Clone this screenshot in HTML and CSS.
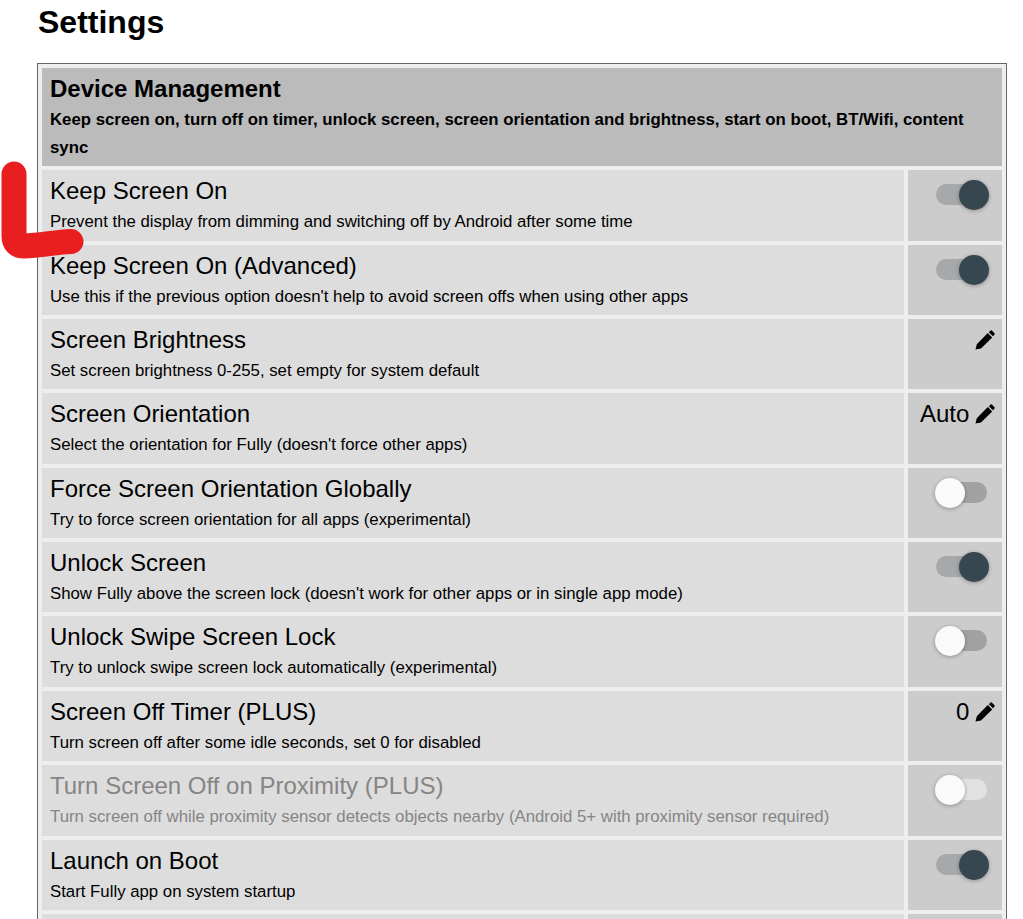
FILE: index.html
```html
<!DOCTYPE html>
<html lang="en">
<head>
    <meta charset="UTF-8">
    <meta name="viewport" content="width=device-width, initial-scale=1.0">
    <title>Settings</title>
    <link rel="stylesheet" href="styles.css">
</head>
<body>
    <h1>Settings</h1>
    <table class="settings">
        <tr>
            <td class="group" colspan="2">
                <div class="group-title">Device Management</div>
                <div class="group-desc">Keep screen on, turn off on timer, unlock screen, screen orientation and brightness, start on boot, BT/Wifi, content sync</div>
            </td>
        </tr>
        <tr>
            <td class="info"><div class="name">Keep Screen On</div><div class="desc">Prevent the display from dimming and switching off by Android after some time</div></td>
            <td class="value"><span class="switch on"><span class="knob"></span></span></td>
        </tr>
        <tr>
            <td class="info"><div class="name">Keep Screen On (Advanced)</div><div class="desc">Use this if the previous option doesn't help to avoid screen offs when using other apps</div></td>
            <td class="value"><span class="switch on"><span class="knob"></span></span></td>
        </tr>
        <tr>
            <td class="info"><div class="name">Screen Brightness</div><div class="desc">Set screen brightness 0-255, set empty for system default</div></td>
            <td class="value"><svg class="pencil" viewBox="0 0 20 20"><path d="M.5 19.5L1.8 14.2L12.8 3L17.2 7.4L6 18.4ZM13.8 2.2L15.6.5Q16.2 0 16.8.5L19.5 3.2Q20 3.8 19.5 4.4L18 6.2Z"/></svg></td>
        </tr>
        <tr>
            <td class="info"><div class="name">Screen Orientation</div><div class="desc">Select the orientation for Fully (doesn't force other apps)</div></td>
            <td class="value">Auto <svg class="pencil" viewBox="0 0 20 20"><path d="M.5 19.5L1.8 14.2L12.8 3L17.2 7.4L6 18.4ZM13.8 2.2L15.6.5Q16.2 0 16.8.5L19.5 3.2Q20 3.8 19.5 4.4L18 6.2Z"/></svg></td>
        </tr>
        <tr>
            <td class="info"><div class="name">Force Screen Orientation Globally</div><div class="desc">Try to force screen orientation for all apps (experimental)</div></td>
            <td class="value"><span class="switch"><span class="knob"></span></span></td>
        </tr>
        <tr>
            <td class="info"><div class="name">Unlock Screen</div><div class="desc">Show Fully above the screen lock (doesn't work for other apps or in single app mode)</div></td>
            <td class="value"><span class="switch on"><span class="knob"></span></span></td>
        </tr>
        <tr>
            <td class="info"><div class="name">Unlock Swipe Screen Lock</div><div class="desc">Try to unlock swipe screen lock automatically (experimental)</div></td>
            <td class="value"><span class="switch"><span class="knob"></span></span></td>
        </tr>
        <tr>
            <td class="info"><div class="name">Screen Off Timer (PLUS)</div><div class="desc">Turn screen off after some idle seconds, set 0 for disabled</div></td>
            <td class="value">0 <svg class="pencil" viewBox="0 0 20 20"><path d="M.5 19.5L1.8 14.2L12.8 3L17.2 7.4L6 18.4ZM13.8 2.2L15.6.5Q16.2 0 16.8.5L19.5 3.2Q20 3.8 19.5 4.4L18 6.2Z"/></svg></td>
        </tr>
        <tr class="disabled">
            <td class="info"><div class="name">Turn Screen Off on Proximity (PLUS)</div><div class="desc">Turn screen off while proximity sensor detects objects nearby (Android 5+ with proximity sensor required)</div></td>
            <td class="value"><span class="switch"><span class="knob"></span></span></td>
        </tr>
        <tr>
            <td class="info"><div class="name">Launch on Boot</div><div class="desc">Start Fully app on system startup</div></td>
            <td class="value"><span class="switch on"><span class="knob"></span></span></td>
        </tr>
        <tr>
            <td class="info"><div class="name">&nbsp;</div><div class="desc">&nbsp;</div></td>
            <td class="value"></td>
        </tr>
    </table>
    <svg class="mark" viewBox="0 0 90 100" width="90" height="100"><path d="M14 14L14 76Q14 86 24 86C40 86 55 82 71 81.5" fill="none" stroke="#e91e1e" stroke-width="25" stroke-linecap="round" stroke-linejoin="round"/></svg>
</body>
</html>
```

FILE: styles.css
```css
html {
    overflow: hidden;
}
body {
    font-family: "Liberation Sans", Arial, sans-serif;
    background-color: white;
    color: black;
    margin: 0;
    padding: 0 16px 0 37px;
    position: relative;
    height: 100vh;
    overflow: hidden;
}
h1 {
    font-size: 32px;
    line-height: 44px;
    margin: 0;
    padding: 0 0 19px 1px;
}
.settings {
    width: 100%;
    border: 1px solid #666;
    border-spacing: 4px;
    background-color: #eee;
}
.settings td {
    padding: 4px 8px;
}
.group {
    background-color: #bbb;
}
.group-title {
    font-size: 24px;
    font-weight: bold;
    line-height: 34px;
}
.group-desc {
    font-size: 16.8px;
    font-weight: bold;
    line-height: 28.06px;
}
.info {
    background-color: #ddd;
}
.name {
    font-size: 24px;
    line-height: 34px;
}
.desc {
    font-size: 16.8px;
    line-height: 28.38px;
}
.value {
    width: 78px;
    background-color: #ccc;
    font-size: 24px;
    line-height: 34px;
    text-align: right;
    vertical-align: top;
    white-space: nowrap;
}
.disabled .name, .disabled .desc {
    color: #858585;
}
.pencil {
    width: 20px;
    height: 20px;
    margin-left: -1px;
    margin-right: -1px;
    vertical-align: -2px;
}
.switch {
    display: block;
    position: relative;
    width: 51px;
    height: 21px;
    margin: 10px 7px 0 auto;
    border-radius: 11px;
    background-color: #a2a2a2;
}
.switch.on {
    background-color: #a6a8a9;
}
.knob {
    position: absolute;
    top: -4px;
    left: -1px;
    width: 30px;
    height: 30px;
    border-radius: 50%;
    background-color: #fafafa;
    box-shadow: 0 1px 4px rgba(0, 0, 0, 0.3);
}
.on .knob {
    left: 23px;
    background-color: #37474f;
}
.disabled .switch {
    background-color: #e0e2e4;
}
.mark {
    position: absolute;
    top: 160px;
    left: 0;
}
```
